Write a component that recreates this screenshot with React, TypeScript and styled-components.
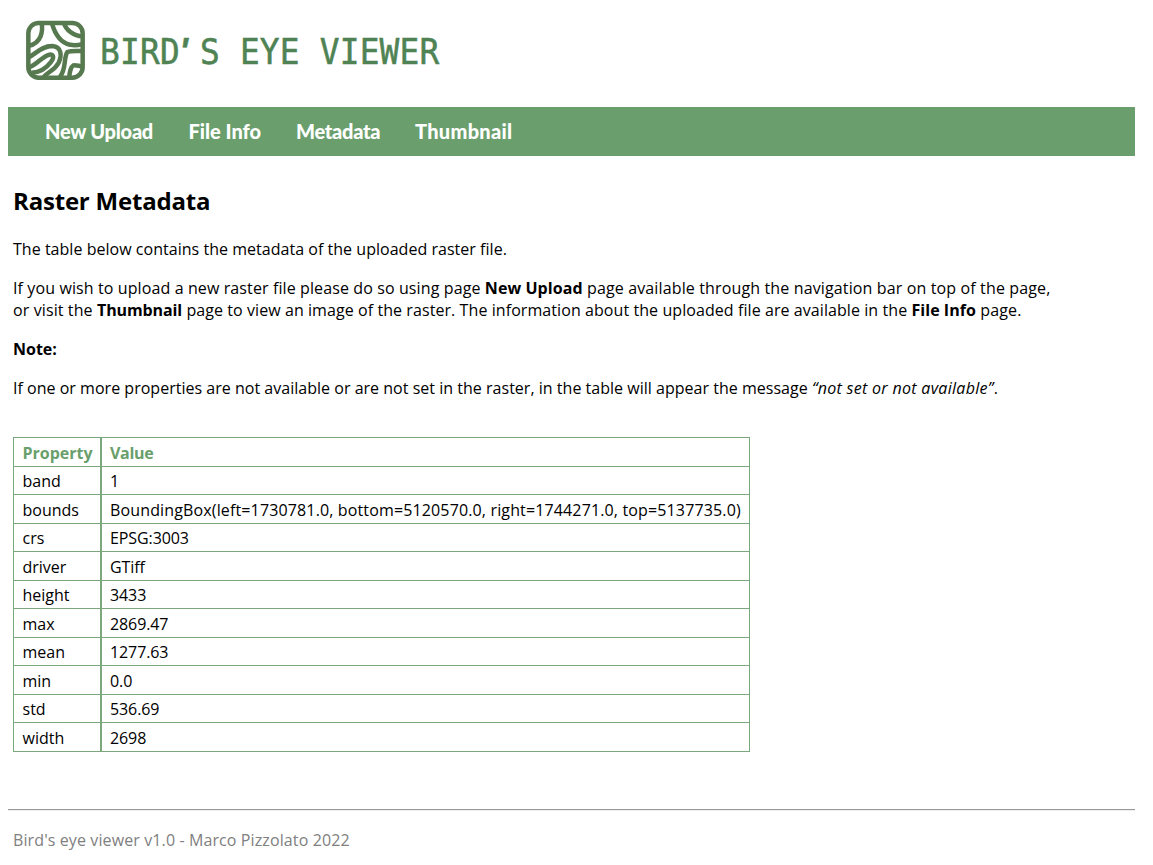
import React from "react";
import styled, { createGlobalStyle } from "styled-components";

const Global = createGlobalStyle`
  body {
    margin: 0;
    background: #fff;
    color: #000;
    font-family: "Open Sans", "Noto Sans", sans-serif;
    font-size: 16px;
    line-height: 22px;
  }
`;

const Page = styled.div`
  width: 1127px;
  margin-left: 8px;
`;

const Header = styled.header`
  height: 107px;
  display: flex;
`;

const Brand = styled.svg`
  display: block;
`;

const BrandName = styled.text`
  font-family: "DejaVu Sans Mono", monospace;
  font-size: 32.8px;
  letter-spacing: 0.22px;
  fill: #4f8354;
  stroke: #4f8354;
  stroke-width: 0.5px;
`;

const Apostrophe = styled.tspan`
  font-family: "Liberation Sans", sans-serif;
  font-size: 35px;
  font-style: italic;
  font-weight: bold;
`;

const NavBar = styled.nav`
  height: 49px;
  box-sizing: border-box;
  padding: 0 0 2px 37px;
  display: flex;
  align-items: center;
  background: #6a9f6d;
`;

const NavItem = styled.a<{ $width: number; $spacing: number }>`
  width: ${(p) => p.$width}px;
  letter-spacing: ${(p) => p.$spacing}px;
  color: #fff;
  font: 900 20px/24px Lato, sans-serif;
  white-space: nowrap;
`;

const Content = styled.main`
  padding: 29px 0 0 5px;
`;

const Title = styled.h2`
  margin: 0 0 21px;
  font-size: 24px;
  line-height: 32px;
  letter-spacing: -0.2px;
`;

const Paragraph = styled.p`
  margin: 0 0 17px;
  white-space: nowrap;
`;

const Text = styled.span<{ $spacing: number }>`
  letter-spacing: ${(p) => p.$spacing}px;
`;

const Strong = styled.strong<{ $spacing?: number }>`
  letter-spacing: ${(p) => p.$spacing ?? 0}px;
`;

const Quote = styled.em`
  letter-spacing: 0.3px;
`;

const Table = styled.div`
  width: 737px;
  box-sizing: border-box;
  margin-top: 38px;
  border: 1px solid #7aa87c;
  border-top: 0;
`;

const Row = styled.div`
  height: 28.5px;
  box-sizing: border-box;
  display: grid;
  grid-template-columns: 88px 1fr;
  border-top: 1px solid #7aa87c;
`;

const Cell = styled.div<{ $head?: boolean; $first?: boolean; $spacing?: number }>`
  padding: 3.9px 8px 0 ${(p) => (p.$first ? 8.5 : 8)}px;
  box-sizing: border-box;
  white-space: nowrap;
  border-right: ${(p) => (p.$first ? "2px solid #7aa87c" : "0")};
  color: ${(p) => (p.$head ? "#6a9f6d" : "#000")};
  font-weight: ${(p) => (p.$head ? 700 : 400)};
  letter-spacing: ${(p) => p.$spacing ?? 0}px;
`;

const Footer = styled.footer`
  margin-top: 57px;
  padding: 19px 0 0 5px;
  border-top: 1px solid #999;
  box-shadow: inset 0 1px #eee;
  color: #808080;
  letter-spacing: 0.11px;
`;

const rows: [string, string][] = [
  ["band", "1"],
  ["bounds", "BoundingBox(left=1730781.0, bottom=5120570.0, right=1744271.0, top=5137735.0)"],
  ["crs", "EPSG:3003"],
  ["driver", "GTiff"],
  ["height", "3433"],
  ["max", "2869.47"],
  ["mean", "1277.63"],
  ["min", "0.0"],
  ["std", "536.69"],
  ["width", "2698"],
];

function Logo() {
  return (
    <Brand width="450" height="100" viewBox="8 0 450 100">
      <g transform="translate(15 10) scale(.33333)" fill="none" stroke="#57794f" strokeWidth="13.5">
        <rect x="40" y="39" width="163" height="164" rx="31" />
        <path d="M80 38C84 62 80 100 41 107" />
        <path d="M110 38C118 66 132 98 165 104C182 108 192 105 203 102" />
        <path d="M146 38C153 59 174 78 203 79" />
        <path d="M41 142C62 132 79 108 112 108C140 110 141 137 131 158C119 181 102 183 86 201" />
        <path d="M41 173C68 163 82 138 103 134C118 132 117 145 107 157C91 178 72 187 50 188" />
        <path d="M134 202C155 179 145 143 157 126C169 121 184 123 203 123" />
        <path d="M163 202C163 187 168 170 175 166C184 164 193 169 203 169" />
      </g>
      <BrandName transform="translate(100 64) scale(1 1.07)">
        BIRD
        <Apostrophe x="79.5">'</Apostrophe>
        <tspan x="100">S EYE VIEWER</tspan>
      </BrandName>
    </Brand>
  );
}

export default function App() {
  return (
    <>
      <Global />
      <Page>
        <Header>
          <Logo />
        </Header>
        <NavBar>
          <NavItem $width={143.5} $spacing={-0.25}>New Upload</NavItem>
          <NavItem $width={107.5} $spacing={0}>File Info</NavItem>
          <NavItem $width={119} $spacing={-0.28}>Metadata</NavItem>
          <NavItem $width={100} $spacing={0.3}>Thumbnail</NavItem>
        </NavBar>
        <Content>
          <Title>Raster Metadata</Title>
          <Paragraph>
            <Text $spacing={0.03}>The table below contains the metadata of the uploaded raster file.</Text>
          </Paragraph>
          <Paragraph>
            <Text $spacing={0.11}>If you wish to upload a new raster file please do so using page </Text>
            <Strong $spacing={0.08}>New Upload</Strong>
            <Text $spacing={0.135}> page available through the navigation bar on top of the page,</Text>
            <br />
            <Text $spacing={0.11}>or visit the </Text>
            <Strong $spacing={-0.1}>Thumbnail</Strong>
            <Text $spacing={0.075}> page to view an image of the raster. The information about the uploaded file are available in the </Text>
            <Strong $spacing={0.05}>File Info</Strong>
            <Text $spacing={0.15}> page.</Text>
          </Paragraph>
          <Paragraph>
            <Strong>Note:</Strong>
          </Paragraph>
          <Paragraph>
            <Text $spacing={0.02}>
              If one or more properties are not available or are not set in the raster, in the table will appear the message{" "}
            </Text>
            <Quote>“not set or not available”</Quote>.
          </Paragraph>
          <Table>
            <Row>
              <Cell $head $first>Property</Cell>
              <Cell $head $spacing={-0.3}>Value</Cell>
            </Row>
            {rows.map(([name, value]) => (
              <Row key={name}>
                <Cell $first>{name}</Cell>
                <Cell $spacing={value.length > 20 ? 0.14 : -0.1}>{value}</Cell>
              </Row>
            ))}
          </Table>
        </Content>
        <Footer>Bird's eye viewer v1.0 - Marco Pizzolato 2022</Footer>
      </Page>
    </>
  );
}
